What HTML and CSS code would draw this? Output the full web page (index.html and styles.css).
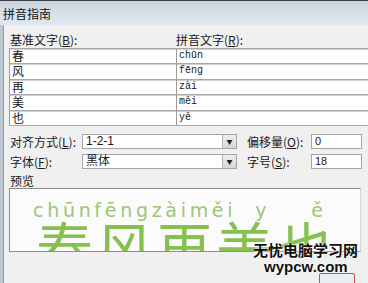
FILE: index.html
```html
<!DOCTYPE html>
<html lang="zh-CN">
<head>
    <meta charset="UTF-8">
    <title>拼音指南</title>
    <link rel="stylesheet" href="styles.css">
</head>
<body>
    <div class="window">
        <div class="titlebar">拼音指南</div>

        <div class="client">
            <!-- column headers -->
            <div class="heads">
                <span class="head-base">基准文字(<u>B</u>):</span>
                <span class="head-py">拼音文字(<u>R</u>):</span>
            </div>

            <!-- base text / ruby text table -->
            <div class="table">
                <div class="cell base">春</div><div class="cell py">chūn</div>
                <div class="cell base">风</div><div class="cell py">fēng</div>
                <div class="cell base">再</div><div class="cell py">zài</div>
                <div class="cell base">美</div><div class="cell py">měi</div>
                <div class="cell base">也</div><div class="cell py">yě</div>
            </div>

            <!-- options -->
            <div class="opts">
                <label class="lbl">对齐方式(<u>L</u>):</label>
                <div class="combo"><span class="val">1-2-1</span><span class="drop">&#9660;</span></div>
                <label class="lbl lbl-right">偏移量(<u>O</u>):</label>
                <div class="field">0</div>

                <label class="lbl">字体(<u>F</u>):</label>
                <div class="combo"><span class="val">黑体</span><span class="drop">&#9660;</span></div>
                <label class="lbl lbl-right">字号(<u>S</u>):</label>
                <div class="field">18</div>
            </div>

            <div class="preview-label">预览</div>
            <div class="preview">
                <div class="pinyin">chūnfēngzàiměi<span class="py-y">y</span><span class="py-e">ě</span></div>
                <div class="hanzi">春风再美也</div>
            </div>
        </div>

        <!-- site watermark over the screenshot -->
        <div class="watermark">
            <div class="wm-cn">无忧电脑学习网</div>
            <div class="wm-en">wypcw.com</div>
        </div>
        <div class="corner-btn"></div>
    </div>
</body>
</html>
```

FILE: styles.css
```css
body {
    margin: 0;
    background: #f0f0f0;
    font-family: "Noto Sans CJK SC", "Liberation Sans", sans-serif;
    font-size: 12px;
    color: #1a1a1a;
}

.window {
    position: relative;
    width: 368px;
    height: 283px;
    overflow: hidden;
    background: #f0f0f0;
}

.titlebar {
    height: 22px;
    border-top: 1px solid #3a3f46;
    background: linear-gradient(to bottom, #c9d4df, #d9e2eb 60%, #dfe7ef);
    padding: 2px 0 0 3px;
    line-height: 22px;
    font-size: 12px;
    color: #111;
}

.client {
    border-left: 3px solid #bcc7d2;
    box-shadow: inset 1px 0 0 #8d99a6;
    padding-left: 6px;
    height: 258px;
}

u {
    text-decoration: underline;
}

.heads {
    display: flex;
    padding-top: 8px;
    height: 15px;
    line-height: 14px;
    white-space: nowrap;
}

.head-base {
    width: 166px;
    padding-left: 1px;
}

.table {
    display: grid;
    grid-template-columns: 167px 1fr;
    grid-auto-rows: 15.4px;
    border-bottom: 1px solid #a9a9a9;
}

.cell {
    background: #fff;
    border-top: 1px solid #a8a8a8;
    box-shadow: inset 0 1px 0 #cfcfcf;
    line-height: 14px;
    overflow: hidden;
}

.cell.base {
    border-left: 1px solid #9c9c9c;
    padding-left: 2px;
}

.cell.py {
    border-left: 1px solid #9c9c9c;
    padding-left: 2px;
    font-family: "Liberation Mono", monospace;
    font-size: 10px;
}

.opts {
    display: grid;
    grid-template-columns: 73px 155px 74px 1fr;
    grid-auto-rows: 15px;
    row-gap: 5px;
    margin-top: 8px;
    align-items: center;
    white-space: nowrap;
}

.lbl {
    padding-left: 1px;
    line-height: 15px;
}

.lbl-right {
    padding-left: 10px;
}

.combo {
    display: flex;
    height: 13px;
    border: 1px solid #a5a5a5;
    background: #fff;
}

.combo .val {
    flex: 1;
    padding-left: 3px;
    line-height: 13px;
    font-family: "Liberation Sans", "Noto Sans CJK SC", sans-serif;
}

.drop {
    width: 13px;
    border-left: 1px solid #b5b5b5;
    background: linear-gradient(to bottom, #eeeeee, #d6d6d6);
    font-size: 6px;
    line-height: 13px;
    text-align: center;
    color: #222;
}

.field {
    height: 13px;
    width: 46px;
    border: 1px solid #a5a5a5;
    background: #fff;
    padding-left: 3px;
    line-height: 13px;
    font-family: "Liberation Sans", sans-serif;
    font-size: 11px;
}

.preview-label {
    margin-top: 5px;
    padding-left: 1px;
    height: 14px;
    line-height: 14px;
}

.preview {
    width: 350px;
    height: 62px;
    border: 1px solid #8c8c8c;
    border-right-color: #d8d8d8;
    background: #fbfbfb;
    overflow: hidden;
}

.pinyin {
    padding-left: 23px;
    margin-top: 8px;
    height: 26px;
    line-height: 26px;
    font-family: "DejaVu Sans", sans-serif;
    font-size: 19px;
    letter-spacing: 3.7px;
    color: #9cc57a;
    white-space: nowrap;
}

.py-y {
    margin-left: 19px;
}

.py-e {
    margin-left: 41px;
}

.hanzi {
    padding-left: 26px;
    margin-top: -8px;
    font-family: "Noto Sans CJK SC", sans-serif;
    font-size: 57px;
    line-height: 60px;
    letter-spacing: 3px;
    color: #86c04e;
    white-space: nowrap;
}

.watermark {
    position: absolute;
    left: 253px;
    top: 240px;
    text-shadow: 0 0 2px #fff, 0 0 2px #fff;
}

.wm-cn {
    font-family: "Noto Sans CJK SC", sans-serif;
    font-weight: 700;
    font-size: 15px;
    line-height: 19px;
    color: #111;
}

.wm-en {
    padding-left: 11px;
    font-family: "Liberation Sans", sans-serif;
    font-weight: 700;
    font-size: 15px;
    line-height: 16px;
    color: #111;
}

.corner-btn {
    position: absolute;
    left: 319px;
    top: 273px;
    width: 34px;
    height: 12px;
    border: 1px solid #c85050;
    border-radius: 2px;
    background: #e8eef4;
}
```
